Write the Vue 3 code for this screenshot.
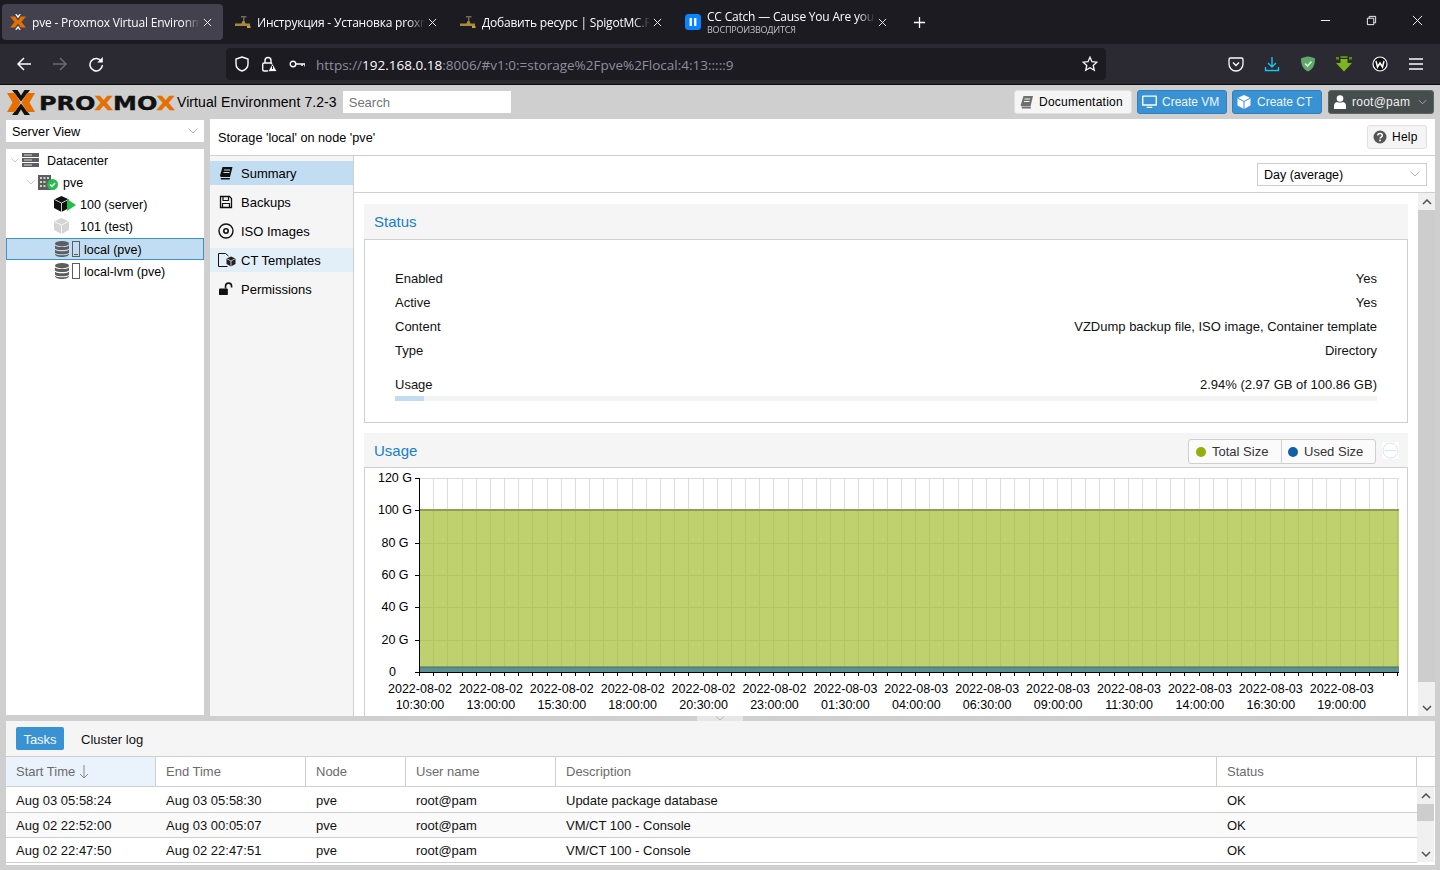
<script setup>
const tabs = [
  { title: 'pve - Proxmox Virtual Environment', kind: 'px', active: true },
  { title: 'Инструкция - Установка proxmox', kind: 'faucet' },
  { title: 'Добавить ресурс | SpigotMC.Ru', kind: 'faucet' },
  { title: 'CC Catch — Cause You Are young', sub: 'ВОСПРОИЗВОДИТСЯ', kind: 'pause' },
]
const navItems = [
  { label: 'Summary', icon: 'book', cls: 'sel' },
  { label: 'Backups', icon: 'save' },
  { label: 'ISO Images', icon: 'disc' },
  { label: 'CT Templates', icon: 'tmpl', cls: 'hov' },
  { label: 'Permissions', icon: 'unlock' },
]
const statusRows = [
  ['Enabled', 'Yes'],
  ['Active', 'Yes'],
  ['Content', 'VZDump backup file, ISO image, Container template'],
  ['Type', 'Directory'],
]
const yTicks = [
  ['120 G', 10, 30], ['100 G', 42, 30], ['80 G', 75, 30], ['60 G', 107, 30], ['40 G', 139, 30], ['20 G', 172, 30], ['0', 204, 27.5],
]
const gridX = Array.from({ length: 70 }, (_, i) => Math.round(54 + i * 14.175) + 0.5)
const xLabels = [
  ['2022-08-02', '10:30:00'], ['2022-08-02', '13:00:00'], ['2022-08-02', '15:30:00'], ['2022-08-02', '18:00:00'],
  ['2022-08-02', '20:30:00'], ['2022-08-02', '23:00:00'], ['2022-08-03', '01:30:00'], ['2022-08-03', '04:00:00'],
  ['2022-08-03', '06:30:00'], ['2022-08-03', '09:00:00'], ['2022-08-03', '11:30:00'], ['2022-08-03', '14:00:00'],
  ['2022-08-03', '16:30:00'], ['2022-08-03', '19:00:00'],
].map((l, i) => ({ d: l[0], t: l[1], x: 55 + i * 70.9 }))
const columns = [
  { label: 'Start Time', w: 150, sorted: true },
  { label: 'End Time', w: 150 },
  { label: 'Node', w: 100 },
  { label: 'User name', w: 150 },
  { label: 'Description', w: 661 },
  { label: 'Status', w: 200 },
]
const tasks = [
  ['Aug 03 05:58:24', 'Aug 03 05:58:30', 'pve', 'root@pam', 'Update package database', 'OK'],
  ['Aug 02 22:52:00', 'Aug 03 00:05:07', 'pve', 'root@pam', 'VM/CT 100 - Console', 'OK'],
  ['Aug 02 22:47:50', 'Aug 02 22:47:51', 'pve', 'root@pam', 'VM/CT 100 - Console', 'OK'],
]
</script>

<template>
  <div class="page">
    <!-- Browser tab strip -->
    <div class="tabstrip">
      <div v-for="t in tabs" :key="t.title" class="tab" :class="{ active: t.active }">
        <svg v-if="t.kind === 'px'" class="favicon" viewBox="0 0 28 27">
          <polygon fill="#e57000" points="0,4 9,4 14,11 19,4 28,4 20,13.500 28,23 19,23 14,16 9,23 0,23 8,13.500" />
          <polygon fill="#fff" points="9,0 12,0 14,3 16,0 19,0 14,7" />
          <polygon fill="#fff" points="9,27 12,27 14,24 16,27 19,27 14,20" />
        </svg>
        <svg v-else-if="t.kind === 'faucet'" class="favicon" viewBox="0 0 16 16">
          <path d="M0 9.500h6.500l1-2.500h2l1 2.500H15V12H0z" fill="#a88a3a" />
          <rect x="8" y="3" width="1.500" height="4" fill="#6f6a50" />
          <rect x="6" y="2" width="5.500" height="1.500" fill="#6f6a50" />
          <rect x="12" y="12" width="3.500" height="2" fill="#c9a13c" />
        </svg>
        <svg v-else class="favicon" viewBox="0 0 16 16">
          <rect width="16" height="16" rx="3.500" fill="#0a84ff" />
          <rect x="4.600" y="4" width="2.300" height="8" fill="#fff" />
          <rect x="9.100" y="4" width="2.300" height="8" fill="#fff" />
        </svg>
        <div class="tab-text">
          <div class="tab-title">{{ t.title }}</div>
          <div v-if="t.sub" class="tab-sub">{{ t.sub }}</div>
        </div>
        <svg class="tab-close" viewBox="0 0 10 10"><path d="M1 1l8 8M9 1l-8 8" stroke="#e8e8ea" stroke-width="1.100" fill="none" /></svg>
      </div>
      <svg class="newtab" viewBox="0 0 14 14"><path d="M7 1v12M1 7h12" stroke="#fbfbfe" stroke-width="1.400" fill="none" /></svg>
      <div class="winctl">
        <div class="winbtn"><svg viewBox="0 0 12 12"><path d="M1 6h10" stroke="#fff" fill="none" /></svg></div>
        <div class="winbtn"><svg viewBox="0 0 12 12"><path d="M1.500 3.500h7v7h-7zM3.500 3.500v-2h7v7h-2" stroke="#fff" fill="none" /></svg></div>
        <div class="winbtn"><svg viewBox="0 0 12 12"><path d="M1 1l10 10M11 1L1 11" stroke="#fff" fill="none" /></svg></div>
      </div>
    </div>

    <!-- Browser toolbar -->
    <div class="toolbar">
      <div class="navbtns">
        <div class="tbtn"><svg viewBox="0 0 16 16"><path d="M15 8H2M8 2L2 8l6 6" stroke="#fbfbfe" stroke-width="1.500" fill="none" /></svg></div>
        <div class="tbtn"><svg viewBox="0 0 16 16"><path d="M1 8h13M8 2l6 6-6 6" stroke="#6b6a72" stroke-width="1.500" fill="none" /></svg></div>
        <div class="tbtn"><svg viewBox="0 0 16 16"><path d="M13.500 5.500A6.200 6.200 0 1 0 14.400 9" stroke="#fbfbfe" stroke-width="1.500" fill="none" /><path d="M14.800 1v5.600H9.200z" fill="#fbfbfe" /></svg></div>
      </div>
      <div class="urlbar">
        <svg class="url-ic shield" viewBox="0 0 16 16"><path d="M8 1l6 2v5c0 3.500-3 6-6 7-3-1-6-3.500-6-7V3z" stroke="#fbfbfe" stroke-width="1.400" fill="none" /></svg>
        <svg class="url-ic lock" viewBox="0 0 16 16">
          <path d="M4 7V4.500a3 3 0 0 1 6 0V7" stroke="#fbfbfe" stroke-width="1.400" fill="none" />
          <rect x="1.700" y="7" width="9.500" height="8" rx="1.500" stroke="#fbfbfe" stroke-width="1.400" fill="none" />
          <polygon points="11.500,7.500 16,15.500 7,15.500" fill="#fbfbfe" stroke="#1c1b22" stroke-width=".8" />
          <rect x="11" y="10" width="1" height="3" fill="#1c1b22" />
        </svg>
        <svg class="url-ic key" viewBox="0 0 16 16"><circle cx="4" cy="8" r="2.800" stroke="#fbfbfe" stroke-width="1.400" fill="none" /><path d="M7 8h9v2.500M13 8v2" stroke="#fbfbfe" stroke-width="1.400" fill="none" /></svg>
        <div class="url-text">https://<span class="host">192.168.0.18</span>:8006/#v1:0:=storage%2Fpve%2Flocal:4:13:::::9</div>
        <svg class="url-star" viewBox="0 0 16 16"><path d="M8 1.200l2 4.500 4.900.5-3.700 3.200 1.100 4.800L8 11.700l-4.300 2.500 1.100-4.800L1.100 6.200 6 5.700z" stroke="#fbfbfe" stroke-width="1.300" fill="none" /></svg>
      </div>
      <div class="exts">
        <div class="tbtn"><svg viewBox="0 0 16 16"><path d="M2.500 2h11A1.500 1.500 0 0 1 15 3.500V8a7 7 0 0 1-14 0V3.500A1.500 1.500 0 0 1 2.500 2z" stroke="#fbfbfe" stroke-width="1.300" fill="none" /><path d="M5 6.500L8 9.500l3-3" stroke="#fbfbfe" stroke-width="1.400" fill="none" /></svg></div>
        <div class="tbtn"><svg viewBox="0 0 16 16"><path d="M8 1v10M4 7l4 4 4-4M1.500 11v3.500h13V11" stroke="#17c4f0" stroke-width="1.400" fill="none" /></svg></div>
        <div class="tbtn"><svg viewBox="0 0 16 16"><path d="M8 .5C5.500.500 3 1.500 1 2.500c0 6 1.500 10.500 7 13 5.500-2.500 7-7 7-13C13 1.500 10.500.500 8 .5z" fill="#5fa868" /><path d="M5 7.500l2.500 2.500L11.500 5.500" stroke="#d6efd9" stroke-width="1.600" fill="none" /></svg></div>
        <div class="tbtn"><svg viewBox="0 0 16 16"><path d="M4.500 3h7v4H16L8 15.500 0 7h4.500z" fill="#7fb51c" /><path d="M0 1h3v2.500H0zM13 1h3v2.500h-3zM4.500 0h7v2h-7z" fill="#5d8a10" /></svg></div>
        <div class="tbtn"><svg viewBox="0 0 16 16"><circle cx="8" cy="8" r="7" fill="#111" stroke="#fbfbfe" stroke-width="1.200" /><path d="M4 5l1.500 6L8 7l2.500 4L12 5" stroke="#fff" stroke-width="1.500" fill="none" /></svg></div>
        <div class="tbtn"><svg viewBox="0 0 16 16"><path d="M1 3h14M1 8h14M1 13h14" stroke="#fbfbfe" stroke-width="1.400" fill="none" /></svg></div>
      </div>
    </div>

    <!-- Proxmox header -->
    <div class="pve-head">
      <svg class="logo" viewBox="0 0 168 27">
        <polygon fill="#111" points="5,1 10.500,1 14,6.500 17.500,1 23,1 14,12.500" />
        <polygon fill="#111" points="5,26 10.500,26 14,20.500 17.500,26 23,26 14,14.500" />
        <polygon fill="#e57000" points="0,4 8,4 13.500,13.500 8,23 0,23 5.500,13.500" />
        <polygon fill="#e57000" points="28,4 20,4 14.500,13.500 20,23 28,23 22.500,13.500" />
        <text class="logo-word" x="32" y="21" textLength="136" lengthAdjust="spacingAndGlyphs">PRO<tspan class="logo-x">X</tspan>MO<tspan class="logo-x">X</tspan></text>
      </svg>
      <div class="ve">Virtual Environment 7.2-3</div>
      <div class="search">Search</div>
      <div class="head-actions">
        <div class="btn doc">
          <svg viewBox="0 0 14 14"><path d="M3.500 1H13l-2.500 10.500H2A1.500 1.500 0 0 1 .7 10z" fill="#6f6f6f" /><path d="M2 12h9l-.4 1.500H2a1 1 0 0 1 0-1.500z" fill="#6f6f6f" /><path d="M4.500 4H10M4 6.500h5.500" stroke="#f5f5f5" fill="none" /></svg>
          Documentation
        </div>
        <div class="btn blue">
          <svg class="wide" viewBox="0 0 16 14"><path d="M1 0h14a1 1 0 0 1 1 1v9a1 1 0 0 1-1 1H1a1 1 0 0 1-1-1V1a1 1 0 0 1 1-1zm.5 1.500v7.800h13V1.500zM5 12h6v1.500H5z" fill="#fff" fill-rule="evenodd" /></svg>
          <span class="vm-label">Create VM</span>
        </div>
        <div class="btn blue">
          <svg viewBox="0 0 14 14"><path d="M7 0l6.500 3v7.500L7 14 .5 10.500V3z" fill="#fff" /><path d="M7 6.500v7.500M.5 3L7 6.500 13.500 3" stroke="#3892d4" fill="none" /></svg>
          Create CT
        </div>
        <div class="btn dark">
          <svg viewBox="0 0 12 14"><circle cx="6" cy="3.500" r="3.300" fill="#fff" /><path d="M0 14v-3.500C0 8.500 2 7 3 7c1 .8 5 .8 6 0 1 0 3 1.500 3 3.500V14z" fill="#fff" /></svg>
          root@pam
          <svg class="chev" viewBox="0 0 10 6"><path d="M1 1l4 4 4-4" stroke="#aab0ae" fill="none" /></svg>
        </div>
      </div>
    </div>

    <!-- Main area -->
    <div class="main">
      <aside class="left">
        <div class="view-select">
          <span class="nudge">Server View</span>
          <svg class="sel-chev" viewBox="0 0 10 6"><path d="M.5.500L5 5 9.500.500" stroke="#b5b5b5" fill="none" /></svg>
        </div>
        <div class="tree">
          <div class="tr lvl0">
            <svg class="exp" viewBox="0 0 8 5"><path d="M.5.500L4 4 7.500.500" stroke="#c8c8c8" fill="none" /></svg>
            <svg class="ti dc" viewBox="0 0 17 14"><path d="M0 0h17v4H0zM0 5h17v4H0zM0 10h17v4H0z" fill="#5d5d5d" /><path d="M2 2h8M2 7h8M2 12h8" stroke="#ddd" fill="none" /></svg>
            <span class="nudge">Datacenter</span>
          </div>
          <div class="tr lvl1">
            <svg class="exp" viewBox="0 0 8 5"><path d="M.5.500L4 4 7.500.500" stroke="#c8c8c8" fill="none" /></svg>
            <svg class="ti node" viewBox="0 0 20 16">
              <path d="M0 1h13v15H0z" fill="#5d5d5d" />
              <path d="M2 3h2v2H2zM5.500 3h2v2h-2zM9 3h2v2H9zM2 7h2v2H2zM5.500 7h2v2h-2zM2 11h2v2H2zM5.500 11h2v2h-2z" fill="#cfcfcf" />
              <circle cx="14.500" cy="10.500" r="5.500" fill="#21bf4b" />
              <path d="M12 10.500l2 2 3-3.500" stroke="#fff" stroke-width="1.500" fill="none" />
            </svg>
            <span class="nudge">pve</span>
          </div>
          <div class="tr lvl2">
            <svg class="ti ct" viewBox="0 0 22 16">
              <path d="M7.500 0L15 3.500V12l-7.500 4L0 12V3.500z" fill="#111" />
              <path d="M7.500 7v9M.5 3.500l7 3.500 7-3.500" stroke="#fff" stroke-width=".8" fill="none" />
              <polygon points="13,3 22,9 13,15" fill="#21bf4b" />
            </svg>
            <span class="nudge">100 (server)</span>
          </div>
          <div class="tr lvl2">
            <svg class="ti ct" viewBox="0 0 22 16">
              <path d="M7.500 0L15 3.500V12l-7.500 4L0 12V3.500z" fill="#d4d4d4" />
              <path d="M7.500 7v9M.5 3.500l7 3.500 7-3.500" stroke="#fff" stroke-width=".8" fill="none" />
            </svg>
            <span class="nudge">101 (test)</span>
          </div>
          <div class="tr lvl2 selected">
            <svg class="ti st" viewBox="0 0 25 16">
              <ellipse cx="7" cy="2.700" rx="7" ry="2.700" fill="#5d5d5d" />
              <path d="M0 4.500c2 2 12 2 14 0v3c-2 2-12 2-14 0zM0 8.700c2 2 12 2 14 0v3c-2 2-12 2-14 0zM0 12.800c2 2 12 2 14 0v.5c0 1.500-3 2.700-7 2.700s-7-1.200-7-2.700z" fill="#5d5d5d" />
              <rect x="17.500" y=".5" width="7" height="15" fill="none" stroke="#5d5d5d" />
              <rect x="19" y="13" width="4" height="1" fill="#5d5d5d" />
            </svg>
            <span class="nudge">local (pve)</span>
          </div>
          <div class="tr lvl2">
            <svg class="ti st" viewBox="0 0 25 16">
              <ellipse cx="7" cy="2.700" rx="7" ry="2.700" fill="#5d5d5d" />
              <path d="M0 4.500c2 2 12 2 14 0v3c-2 2-12 2-14 0zM0 8.700c2 2 12 2 14 0v3c-2 2-12 2-14 0zM0 12.800c2 2 12 2 14 0v.5c0 1.500-3 2.700-7 2.700s-7-1.200-7-2.700z" fill="#5d5d5d" />
              <rect x="17.500" y=".5" width="7" height="15" fill="none" stroke="#5d5d5d" />
            </svg>
            <span class="nudge">local-lvm (pve)</span>
          </div>
        </div>
      </aside>

      <section class="right">
        <div class="titlebar">
          <span class="nudge">Storage 'local' on node 'pve'</span>
          <div class="btn help">
            <svg viewBox="0 0 14 14"><circle cx="7" cy="7" r="6.500" fill="#555" /><path d="M4.800 5.500C4.800 2.800 9.300 2.800 9.300 5.400 9.300 7 7 7 7 8.500" stroke="#fff" stroke-width="1.500" fill="none" /><rect x="6.200" y="9.600" width="1.700" height="1.700" fill="#fff" /></svg>
            Help
          </div>
        </div>
        <div class="body-row">
          <nav class="nav">
            <div v-for="n in navItems" :key="n.label" class="nav-item" :class="n.cls">
              <svg v-if="n.icon === 'book'" class="nav-ic" viewBox="0 0 14 14"><path d="M3.500 1H13.500l-2.500 10H2.200A1.400 1.400 0 0 1 1 9.500zM2 12h9l-.3 1.500H2a1 1 0 0 1 0-1.500z" fill="#111" /><path d="M5 4h6M4.500 6.500h6" stroke="#c2ddf2" fill="none" /></svg>
              <svg v-else-if="n.icon === 'save'" class="nav-ic" viewBox="0 0 14 14"><path d="M1.500 1.500h9l2 2v9h-11z" stroke="#111" stroke-width="1.300" fill="none" /><path d="M4 1.500v4h5.500v-4M3.500 12.500V8.500h7v4" stroke="#111" stroke-width="1.200" fill="none" /></svg>
              <svg v-else-if="n.icon === 'disc'" class="nav-ic disc" viewBox="0 0 16 16"><circle cx="8" cy="8" r="7" stroke="#111" stroke-width="1.400" fill="none" /><circle cx="8" cy="8" r="2.200" stroke="#111" stroke-width="1.600" fill="none" /></svg>
              <svg v-else-if="n.icon === 'tmpl'" class="nav-ic tmpl" viewBox="0 0 18 14"><path d="M.5.500h7l3 2.500M.5.500v13h9" stroke="#111" fill="none" /><path d="M13 3.500l4.500 2v5.500L13 13.500l-4.500-2.500V5.500z" fill="#222" /><path d="M13 8v5.500M8.500 5.500L13 8l4.500-2.500" stroke="#fff" stroke-width=".7" fill="none" /></svg>
              <svg v-else class="nav-ic" viewBox="0 0 15 13"><rect x="0" y="6" width="9.500" height="7" rx="1" fill="#111" /><path d="M7 6V3.500a3 3 0 0 1 6.500 0V5" stroke="#111" stroke-width="1.700" fill="none" /></svg>
              <span class="nav-label">{{ n.label }}</span>
            </div>
          </nav>
          <div class="content">
            <div class="period">
              <div class="period-box">
                <span class="nudge">Day (average)</span>
                <svg class="sel-chev" viewBox="0 0 10 6"><path d="M.5.500L5 5 9.500.500" stroke="#b5b5b5" fill="none" /></svg>
              </div>
            </div>
            <div class="scroller">
              <div class="panels">
                <div class="panel-head status-head">Status</div>
                <div class="status-body">
                  <div v-for="r in statusRows" :key="r[0]" class="srow"><span>{{ r[0] }}</span><span>{{ r[1] }}</span></div>
                  <div class="srow usage-row"><span>Usage</span><span>2.94% (2.97 GB of 100.86 GB)</span></div>
                  <div class="progress"><div class="progress-fill"></div></div>
                </div>
                <div class="panel-head usage-head">
                  <span>Usage</span>
                  <div class="legend">
                    <div class="leg"><i class="dot green"></i>Total Size</div>
                    <div class="leg"><i class="dot navy"></i>Used Size</div>
                  </div>
                  <svg class="undo" viewBox="0 0 17 17"><rect width="17" height="17" fill="#fff" /><circle cx="8.500" cy="8.500" r="7.500" stroke="#d4e5f3" fill="none" /><path d="M3 8.500h11" stroke="#d4e5f3" fill="none" /></svg>
                </div>
                <div class="chart-box">
                  <svg class="chart" width="1042" height="248" viewBox="0 0 1042 248">
                    <rect x="54" y="42" width="980" height="162" fill="#bfd06f" />
                    <rect x="54" y="199" width="980" height="5" fill="#5b9090" />
                    <line v-for="x in gridX" :key="x" :x1="x" :x2="x" y1="10" y2="42" stroke="#dcdcdc" />
                    <line v-for="x in gridX" :key="'g' + x" :x1="x" :x2="x" y1="42" y2="199" stroke="#b2c465" />
                    <line v-for="x in gridX" :key="'t' + x" :x1="x" :x2="x" y1="204" y2="208" stroke="#000" />
                    <line v-for="t in yTicks.slice(2, 6)" :key="t[0]" x1="54" x2="1034" :y1="t[1] + 0.5" :y2="t[1] + 0.5" stroke="#b2c465" />
                    <line x1="54" x2="1034" y1="10.500" y2="10.500" stroke="#dcdcdc" />
                    <line x1="54" x2="1034" y1="42" y2="42" stroke="#8d9f50" stroke-width="2" />
                    <line x1="54" x2="1034" y1="199" y2="199" stroke="#456f66" />
                    <line x1="54.500" x2="54.500" y1="10" y2="204" stroke="#000" />
                    <line x1="54" x2="1034" y1="204.500" y2="204.500" stroke="#000" />
                    <g v-for="t in yTicks" :key="'y' + t[0]">
                      <line x1="50" x2="54" :y1="t[1] + 0.5" :y2="t[1] + 0.5" stroke="#000" />
                      <text class="ct-text" :x="t[2]" :y="t[1] + 3.5" text-anchor="middle">{{ t[0] }}</text>
                    </g>
                    <g v-for="l in xLabels" :key="l.t">
                      <text class="ct-text" :x="l.x" y="224.500" text-anchor="middle">{{ l.d }}</text>
                      <text class="ct-text" :x="l.x" y="240.500" text-anchor="middle">{{ l.t }}</text>
                    </g>
                  </svg>
                </div>
              </div>
              <div class="vscroll">
                <div class="sb-arrow"><svg viewBox="0 0 10 6"><path d="M1 5l4-4 4 4" stroke="#505050" stroke-width="1.500" fill="none" /></svg></div>
                <div class="sb-thumb"></div>
                <div class="sb-rest"><svg viewBox="0 0 10 6"><path d="M1 1l4 4 4-4" stroke="#505050" stroke-width="1.500" fill="none" /></svg></div>
              </div>
            </div>
          </div>
        </div>
      </section>
    </div>

    <!-- Splitter -->
    <div class="splitter">
      <div class="split-handle"><svg viewBox="0 0 10 5"><path d="M1 .500L5 4 9 .500" stroke="#b8b8b8" fill="none" /></svg></div>
    </div>

    <!-- Tasks -->
    <div class="tasks">
      <div class="task-tabs">
        <div class="ttab on">Tasks</div>
        <div class="ttab">Cluster log</div>
      </div>
      <div class="thead">
        <div v-for="c in columns" :key="c.label" class="th" :class="{ sorted: c.sorted }" :style="{ width: c.w + 'px' }">
          {{ c.label }}
          <svg v-if="c.sorted" class="sort" viewBox="0 0 10 14"><path d="M5 0v13M1 9l4 4 4-4" stroke="#8a8a8a" fill="none" /></svg>
        </div>
      </div>
      <div class="tbody-wrap">
        <div class="tbody">
          <div v-for="(r, i) in tasks" :key="i" class="trow">
            <div v-for="(v, j) in r" :key="j" class="td" :style="{ width: columns[j].w + 'px' }">{{ v }}</div>
          </div>
        </div>
        <div class="tscroll">
          <div class="sb-arrow"><svg viewBox="0 0 10 6"><path d="M1 5l4-4 4 4" stroke="#505050" stroke-width="1.500" fill="none" /></svg></div>
          <div class="tsb-thumb"></div>
          <div class="tsb-rest"><svg viewBox="0 0 10 6"><path d="M1 1l4 4 4-4" stroke="#505050" stroke-width="1.500" fill="none" /></svg></div>
        </div>
      </div>
    </div>
  </div>
</template>

<style>
html, body { margin: 0; background: #ccc; overflow: hidden; }
</style>

<style scoped>
.page {
  width: 1440px; height: 870px; overflow: hidden; background: #cfcfcf;
  display: flex; flex-direction: column;
  font-family: "Liberation Sans", Arial, sans-serif; font-size: 13px; color: #000;
}
svg { display: block; flex: none; }
.nudge { padding-top: 2px; }

/* browser chrome */
.tabstrip { height: 44px; background: #1c1b22; display: flex; align-items: center; padding-left: 2px; box-sizing: border-box; font-family: "Open Sans", sans-serif; }
.tab { width: 221px; height: 36px; margin-right: 4px; border-radius: 4px; display: flex; align-items: center; padding-left: 8px; box-sizing: border-box; color: #fbfbfe; flex: none; }
.tab.active { background: #42414d; }
.favicon { width: 16px; height: 16px; margin-right: 6px; }
.tab-text { width: 168px; overflow: hidden; white-space: nowrap; letter-spacing: -.2px; -webkit-mask-image: linear-gradient(90deg, #000 90%, transparent); mask-image: linear-gradient(90deg, #000 90%, transparent); }
.tab-title { font-size: 12px; line-height: 15px; }
.tab-sub { font-size: 9px; line-height: 11px; color: #c0c0c6; }
.tab-close { width: 9px; height: 9px; margin-left: 3px; }
.newtab { width: 13px; height: 13px; margin-left: 11px; }
.winctl { margin-left: auto; display: flex; align-self: stretch; }
.winbtn { width: 46px; display: flex; align-items: center; justify-content: center; padding-bottom: 3px; box-sizing: border-box; }
.winbtn svg { width: 11px; height: 11px; }

.toolbar { height: 41px; background: #2b2a33; border-bottom: 1px solid #0c0c0d; box-sizing: border-box; display: flex; align-items: center; padding-left: 6px; font-family: "Open Sans", sans-serif; }
.navbtns { display: flex; width: 220px; }
.tbtn { width: 36px; height: 32px; display: flex; align-items: center; justify-content: center; }
.tbtn svg { width: 16px; height: 16px; }
.urlbar { width: 880px; height: 32px; background: #1c1b22; border-radius: 4px; display: flex; align-items: center; padding-left: 8px; box-sizing: border-box; }
.url-ic { width: 16px; height: 16px; }
.lock { margin-left: 11px; }
.key { margin-left: 12px; }
.url-text { margin: 1px 0 0 11px; font-size: 13.500px; color: #8f8f9d; white-space: nowrap; }
.host { color: #fbfbfe; }
.url-star { width: 16px; height: 16px; margin-left: auto; margin-right: 8px; }
.exts { display: flex; margin-left: 112px; }

/* proxmox head */
.pve-head { height: 34px; display: flex; align-items: center; padding-left: 7px; background: #cfcfcf; flex: none; }
.logo { width: 168px; height: 27px; margin-top: 1px; }
.logo-word { font: bold 19px "DejaVu Sans", sans-serif; fill: #111; stroke: #111; stroke-width: .4px; }
.logo-x { fill: #e57000; stroke: #e57000; }
.ve { margin-left: 2px; font-size: 14px; letter-spacing: .08px; white-space: nowrap; }
.search { margin-left: 6px; width: 168px; height: 22px; box-sizing: border-box; padding-left: 6px; line-height: 24px; background: #fff; color: #757575; }
.head-actions { margin-left: auto; display: flex; gap: 5px; padding-right: 6px; }
.btn { height: 24px; display: flex; align-items: center; box-sizing: border-box; border: 1px solid; border-radius: 3px; white-space: nowrap; font-size: 12px; letter-spacing: .25px; padding-bottom: 1px; }
.btn svg { width: 14px; height: 14px; }
.doc { width: 118px; padding-left: 5px; gap: 5px; background: #f5f5f5; border-color: #e0e0e0; }
.blue { width: 90px; padding-left: 4px; gap: 6px; background: #3892d4; border-color: #2f80bd; color: #f0f7fc; letter-spacing: 0; }
.btn svg.wide { width: 15px; height: 14px; }
.vm-label { margin-left: -1px; }
.dark { width: 106px; padding-left: 4px; gap: 5px; background: #464d4d; border-color: #5d6565; color: #f0f0f0; margin-left: 1px; }
.btn svg.chev { width: 9px; height: 6px; margin-left: 3px; }

/* main */
.main { height: 597px; display: flex; padding: 0 5px 0 6px; gap: 6px; flex: none; box-sizing: border-box; }
.left { width: 198px; display: flex; flex-direction: column; padding-bottom: 1px; box-sizing: border-box; }
.view-select { height: 22px; margin-top: 1px; margin-bottom: 7px; background: #fff; padding: 0 6px; display: flex; align-items: center; justify-content: space-between; flex: none; font-size: 12.700px; }
.sel-chev { width: 10px; height: 6px; }
.tree { flex: 1; background: #fff; font-size: 12.500px; }
.tr { height: 22px; display: flex; align-items: center; box-sizing: border-box; white-space: nowrap; }
.lvl0 { padding-left: 5px; }
.lvl1 { padding-left: 21px; }
.lvl2 { padding-left: 48px; }
.exp { width: 8px; height: 5px; margin-right: 3px; }
.ti.dc { width: 17px; height: 14px; margin-right: 8px; }
.ti.node { width: 20px; height: 16px; margin-right: 5px; }
.ti.ct { width: 22px; height: 16px; margin-right: 4px; }
.ti.st { width: 25px; height: 16px; margin-right: 4px; margin-left: 1px; }
.selected { background: #c2ddf2; box-shadow: inset 0 0 0 1px #3892d4; margin-top: 1px; }
.right { width: 1225px; display: flex; flex-direction: column; }
.titlebar { height: 37px; flex: none; box-sizing: border-box; background: #fff; border-bottom: 1px solid #cfcfcf; display: flex; align-items: center; justify-content: space-between; padding: 0 8px; font-size: 12.700px; }
.help { width: 60px; height: 24px; padding-left: 5px; padding-bottom: 0; gap: 5px; background: #f5f5f5; border-color: #e0e0e0; margin-top: -1px; }
.body-row { flex: 1; display: flex; min-height: 0; }
.nav { width: 144px; flex: none; box-sizing: border-box; background: #f5f5f5; border-right: 1px solid #cfcfcf; padding-top: 5px; }
.nav-item { height: 24px; margin-bottom: 5px; display: flex; align-items: center; padding-left: 9px; }
.nav-item.sel { background: #c2ddf2; }
.nav-item.hov { background: #e2eff9; }
.nav-ic { width: 14px; height: 14px; margin-right: 8px; }
.nav-ic.disc { width: 16px; height: 16px; margin-left: -1px; margin-right: 7px; }
.nav-ic.tmpl { width: 18px; height: 14px; margin-left: -1px; margin-right: 5px; }
.content { flex: 1; min-width: 0; display: flex; flex-direction: column; background: #fff; }
.period { height: 37px; flex: none; box-sizing: border-box; border-bottom: 1px solid #cfcfcf; display: flex; justify-content: flex-end; align-items: center; padding-right: 8px; }
.period-box { width: 170px; height: 23px; box-sizing: border-box; border: 1px solid #cfcfcf; display: flex; align-items: center; justify-content: space-between; padding: 0 6px; font-size: 12.500px; }
.scroller { flex: 1; min-height: 0; display: flex; overflow: hidden; }
.panels { width: 1064px; flex: none; box-sizing: border-box; padding: 11px 10px 0; background: #fff; overflow: hidden; }
.panel-head { background: #f5f5f5; color: #157fcc; font-size: 15px; display: flex; align-items: center; padding-left: 10px; box-sizing: border-box; }
.status-head { height: 35px; }
.status-body { height: 184px; box-sizing: border-box; border: 1px solid #cfcfcf; padding: 26px 30px 0; margin-bottom: 10px; }
.srow { height: 24px; display: flex; justify-content: space-between; align-items: center; color: #111; }
.usage-row { margin-top: 10px; }
.progress { height: 5px; background: #f3f3f3; }
.progress-fill { width: 29px; height: 5px; background: #c2ddf2; }
.usage-head { height: 34px; padding-right: 9px; }
.legend { margin-left: auto; height: 25px; box-sizing: border-box; border: 1px solid #cfcfcf; border-radius: 3px; background: #fbfbfb; display: flex; margin-top: 3px; color: #333; font-size: 13px; }
.leg { display: flex; align-items: center; padding-left: 7px; width: 92px; box-sizing: border-box; }
.leg + .leg { border-left: 1px solid #cfcfcf; padding-left: 6px; width: 94px; }
.dot { width: 10px; height: 10px; border-radius: 50%; margin-right: 6px; margin-top: 1px; }
.dot.green { background: #94ae0a; }
.dot.navy { background: #115fa6; }
.undo { width: 17px; height: 17px; margin-left: 6px; }
.chart-box { height: 260px; box-sizing: border-box; border: 1px solid #cfcfcf; }
.ct-text { font-family: "Liberation Sans", Arial, sans-serif; font-size: 12.500px; fill: #000; }
.vscroll { width: 17px; flex: none; display: flex; flex-direction: column; }
.sb-arrow { height: 17px; background: #f0f0f0; display: flex; align-items: center; justify-content: center; flex: none; }
.sb-arrow svg, .sb-rest svg, .tsb-rest svg { width: 10px; height: 6px; }
.sb-thumb { height: 472px; background: #cdcdcd; }
.sb-rest { flex: 1; background: #f0f0f0; display: flex; align-items: flex-end; justify-content: center; padding-bottom: 5px; }

/* splitter */
.splitter { height: 5px; flex: none; display: flex; justify-content: center; background: #cfcfcf; }
.split-handle { width: 46px; background: #e6e6e6; display: flex; justify-content: center; }
.split-handle svg { width: 10px; height: 5px; }

/* tasks */
.tasks { flex: none; height: 144px; margin: 0 5px; box-sizing: border-box; background: #fff; border-left: 1px solid #cfcfcf; display: flex; flex-direction: column; }
.task-tabs { height: 36px; flex: none; box-sizing: border-box; background: #f5f5f5; border-bottom: 1px solid #cfcfcf; padding: 6px 0 0 10px; display: flex; }
.ttab { height: 23px; padding: 0 8px; line-height: 25px; border-radius: 2px; color: #111; margin-left: 1px; }
.ttab.on { width: 48px; box-sizing: border-box; background: #3892d4; color: #f4f9fd; padding: 0; text-align: center; margin-right: 8px; margin-left: 0; }
.thead { height: 30px; flex: none; box-sizing: border-box; display: flex; border-bottom: 1px solid #cfcfcf; }
.th { box-sizing: border-box; height: 29px; padding-left: 10px; border-right: 1px solid #cfcfcf; display: flex; align-items: center; gap: 4px; color: #6b6b6b; flex: none; }
.th.sorted { background: #eaf3fb; }
.sort { width: 10px; height: 14px; }
.tbody-wrap { flex: 1; display: flex; min-height: 0; }
.tbody { width: 1411px; flex: none; }
.trow { height: 25px; box-sizing: border-box; display: flex; align-items: center; border-bottom: 1px solid #cfcfcf; }
.trow:first-child { height: 26px; padding-top: 1px; }
.trow:nth-child(2) { background: #fafafa; }
.td { padding-left: 10px; box-sizing: border-box; flex: none; white-space: nowrap; color: #111; }
.tscroll { width: 17px; height: 75px; flex: none; display: flex; flex-direction: column; }
.tsb-thumb { height: 17px; background: #cdcdcd; }
.tsb-rest { flex: 1; background: #f0f0f0; display: flex; align-items: flex-end; justify-content: center; padding-bottom: 5px; }
</style>
